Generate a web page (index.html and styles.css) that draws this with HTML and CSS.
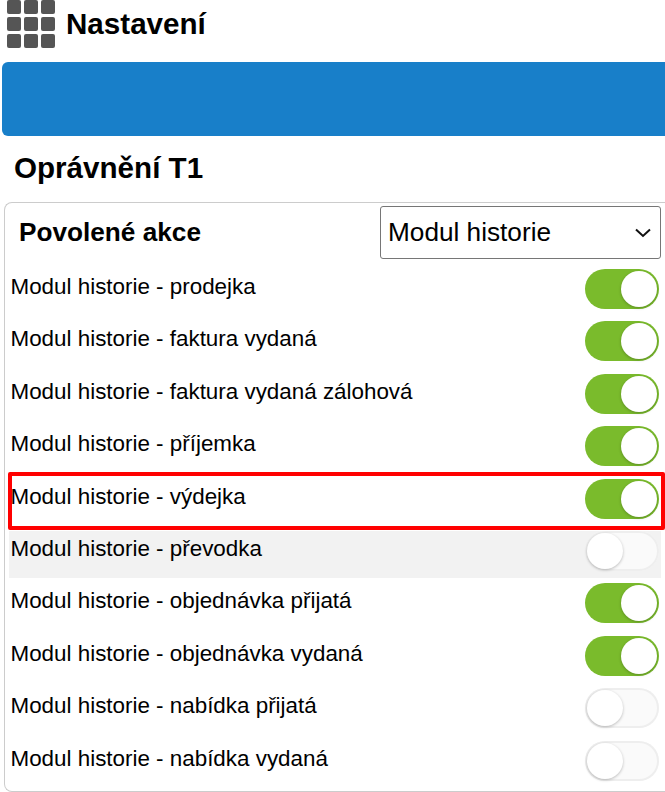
FILE: index.html
```html
<!DOCTYPE html>
<html lang="cs">
<head>
  <meta charset="UTF-8">
  <meta name="viewport" content="width=device-width, initial-scale=1.0">
  <title>Nastavení</title>
  <link rel="stylesheet" href="styles.css">
</head>
<body>

  <!-- hlavicka -->
  <div class="top-bar">
    <div class="app-grid">
      <span></span><span></span><span></span>
      <span></span><span></span><span></span>
      <span></span><span></span><span></span>
    </div>
    <div class="top-title">Nastavení</div>
  </div>

  <div class="blue-bar"></div>

  <h1 class="page-title">Oprávnění T1</h1>

  <!-- seznam povolenych akci -->
  <div class="card">
    <div class="card-head">
      <div class="card-title">Povolené akce</div>
      <div class="select-box">
        <span>Modul historie</span>
        <svg width="18" height="10" viewBox="0 0 18 10"><path d="M2 1.5 L9 8 L16 1.5" fill="none" stroke="#111" stroke-width="2"/></svg>
      </div>
    </div>

    <div class="row"><span>Modul historie - prodejka</span><div class="toggle on"></div></div>
    <div class="row"><span>Modul historie - faktura vydaná</span><div class="toggle on"></div></div>
    <div class="row"><span>Modul historie - faktura vydaná zálohová</span><div class="toggle on"></div></div>
    <div class="row"><span>Modul historie - příjemka</span><div class="toggle on"></div></div>
    <div class="row marked"><span>Modul historie - výdejka</span><div class="toggle on"></div></div>
    <div class="row hover"><span>Modul historie - převodka</span><div class="toggle"></div></div>
    <div class="row"><span>Modul historie - objednávka přijatá</span><div class="toggle on"></div></div>
    <div class="row"><span>Modul historie - objednávka vydaná</span><div class="toggle on"></div></div>
    <div class="row"><span>Modul historie - nabídka přijatá</span><div class="toggle"></div></div>
    <div class="row"><span>Modul historie - nabídka vydaná</span><div class="toggle"></div></div>
  </div>

</body>
</html>
```

FILE: styles.css
```css
html, body {
  height: 792px;
  overflow: hidden;
}
body {
  font-family: "Liberation Sans", Arial, sans-serif;
  margin: 0;
  padding: 0;
  background-color: #fff;
  color: #000;
}
/* hlavicka */
.top-bar {
  display: flex;
  align-items: center;
  height: 48px;
  padding-left: 7px;
}
.app-grid {
  display: grid;
  grid-template-columns: repeat(3, 14px);
  grid-template-rows: repeat(3, 14px);
  gap: 3px;
  margin-top: -1px;
}
.app-grid span {
  background-color: #555;
  border-radius: 2px;
}
.top-title {
  margin-left: 11px;
  margin-top: -1px;
  font-size: 29.6px;
  font-weight: bold;
}
.blue-bar {
  height: 74px;
  margin: 14px 0 0 2px;
  background-color: #187fc9;
  border-radius: 6px 0 0 6px;
}
.page-title {
  margin: 15px 0 17px 14px;
  font-size: 29.6px;
  line-height: 34px;
  font-weight: bold;
}
/* karta */
.card {
  margin-left: 4px;
  height: 590px;
  box-sizing: border-box;
  border: 1px solid #ccc;
  border-right: none;
  border-radius: 8px 0 0 8px;
  padding: 3px 4px 0 4px;
}
.card-head {
  display: flex;
  justify-content: space-between;
  align-items: center;
  height: 53px;
  padding-left: 10px;
  margin-bottom: 10px;
}
.card-title {
  font-size: 26.2px;
  font-weight: bold;
}
.select-box {
  display: flex;
  align-items: center;
  justify-content: space-between;
  width: 281px;
  height: 53px;
  box-sizing: border-box;
  padding: 0 8px 0 7px;
  border: 1px solid #767676;
  border-radius: 3px;
  font-size: 26.2px;
}
.row {
  position: relative;
  display: flex;
  justify-content: space-between;
  height: 52.4px;
  padding: 0 2px 0 1.5px;
  font-size: 22.4px;
}
.row span {
  line-height: 36px;
}
.row.hover {
  background-color: #f2f2f2;
  height: 47px;
  margin-bottom: 5.4px;
}
/* cervene oramovani */
.row.marked::after {
  content: "";
  position: absolute;
  left: -1px;
  top: -7px;
  right: -4px;
  height: 50px;
  border: 4px solid #f00;
  border-radius: 2px;
}
/* prepinac */
.toggle {
  position: relative;
  width: 74px;
  height: 40px;
  box-sizing: border-box;
  background-color: #fafafa;
  border-radius: 20px;
  box-shadow: inset 0 0 0 2px #eee;
}
.toggle::after {
  content: "";
  position: absolute;
  left: 2px;
  top: 2px;
  width: 36px;
  height: 36px;
  background-color: #fff;
  border-radius: 50%;
  box-shadow: 0 1px 3px rgba(0, 0, 0, 0.25);
}
.toggle.on {
  background-color: #7abb2c;
  box-shadow: none;
}
.toggle.on::after {
  left: 36px;
}
```
